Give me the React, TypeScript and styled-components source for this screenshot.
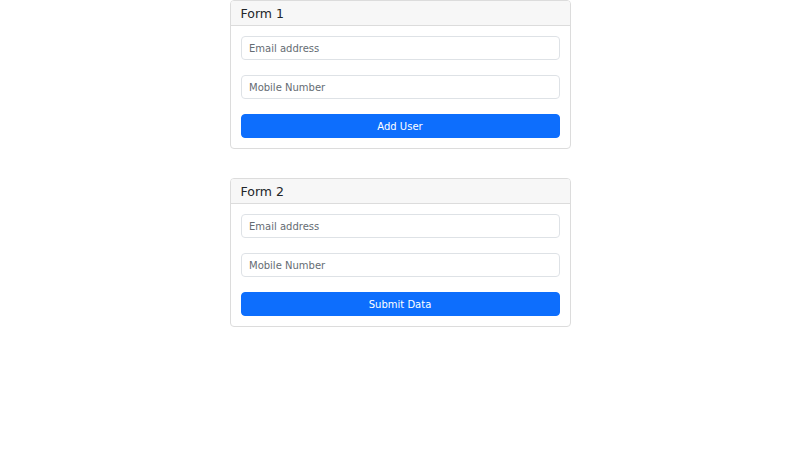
import React from 'react';
import styled, { createGlobalStyle } from 'styled-components';

const GlobalStyle = createGlobalStyle`
  html, body {
    margin: 0;
    padding: 0;
    background: #fff;
  }
  body {
    font-family: "DejaVu Sans", "Liberation Sans", sans-serif;
    color: #212529;
  }
`;

const Page = styled.div`
  display: flex;
  flex-direction: column;
  align-items: center;
  gap: 29px;
`;

const Card = styled.section`
  width: 341px;
  box-sizing: border-box;
  border: 1px solid #dcdcdc;
  border-radius: 4px;
  background: #fff;
  overflow: hidden;
`;

const CardHeader = styled.div`
  height: 24px;
  display: flex;
  align-items: center;
  padding: 0 10px;
  background: #f7f7f7;
  border-bottom: 1px solid #dcdcdc;

  h5 {
    margin: 0;
    font-size: 12.5px;
    font-weight: 400;
    line-height: 1.2;
    color: #212529;
  }
`;

const Form = styled.form`
  display: flex;
  flex-direction: column;
  gap: 15px;
  padding: 10px;
`;

const Input = styled.input`
  height: 24px;
  box-sizing: border-box;
  width: 100%;
  padding: 0 7.5px;
  font-family: inherit;
  font-size: 10px;
  color: #212529;
  border: 1px solid #dee2e6;
  border-radius: 4px;
  outline: none;

  &::placeholder {
    color: #656c73;
  }
`;

const Button = styled.button`
  height: 24px;
  width: 100%;
  font-family: inherit;
  font-size: 10px;
  color: #fff;
  background-color: #0d6efd;
  border: 1px solid #0d6efd;
  border-radius: 4px;
  cursor: pointer;
`;

const UserForm = ({ title, action }: { title: string; action: string }) => (
  <Card>
    <CardHeader>
      <h5>{title}</h5>
    </CardHeader>
    <Form onSubmit={(e) => e.preventDefault()}>
      <Input type="email" placeholder="Email address" />
      <Input type="text" placeholder="Mobile Number" />
      <Button type="submit">{action}</Button>
    </Form>
  </Card>
);

export default function App() {
  return (
    <>
      <GlobalStyle />
      <Page>
        <UserForm title="Form 1" action="Add User" />
        <UserForm title="Form 2" action="Submit Data" />
      </Page>
    </>
  );
}
